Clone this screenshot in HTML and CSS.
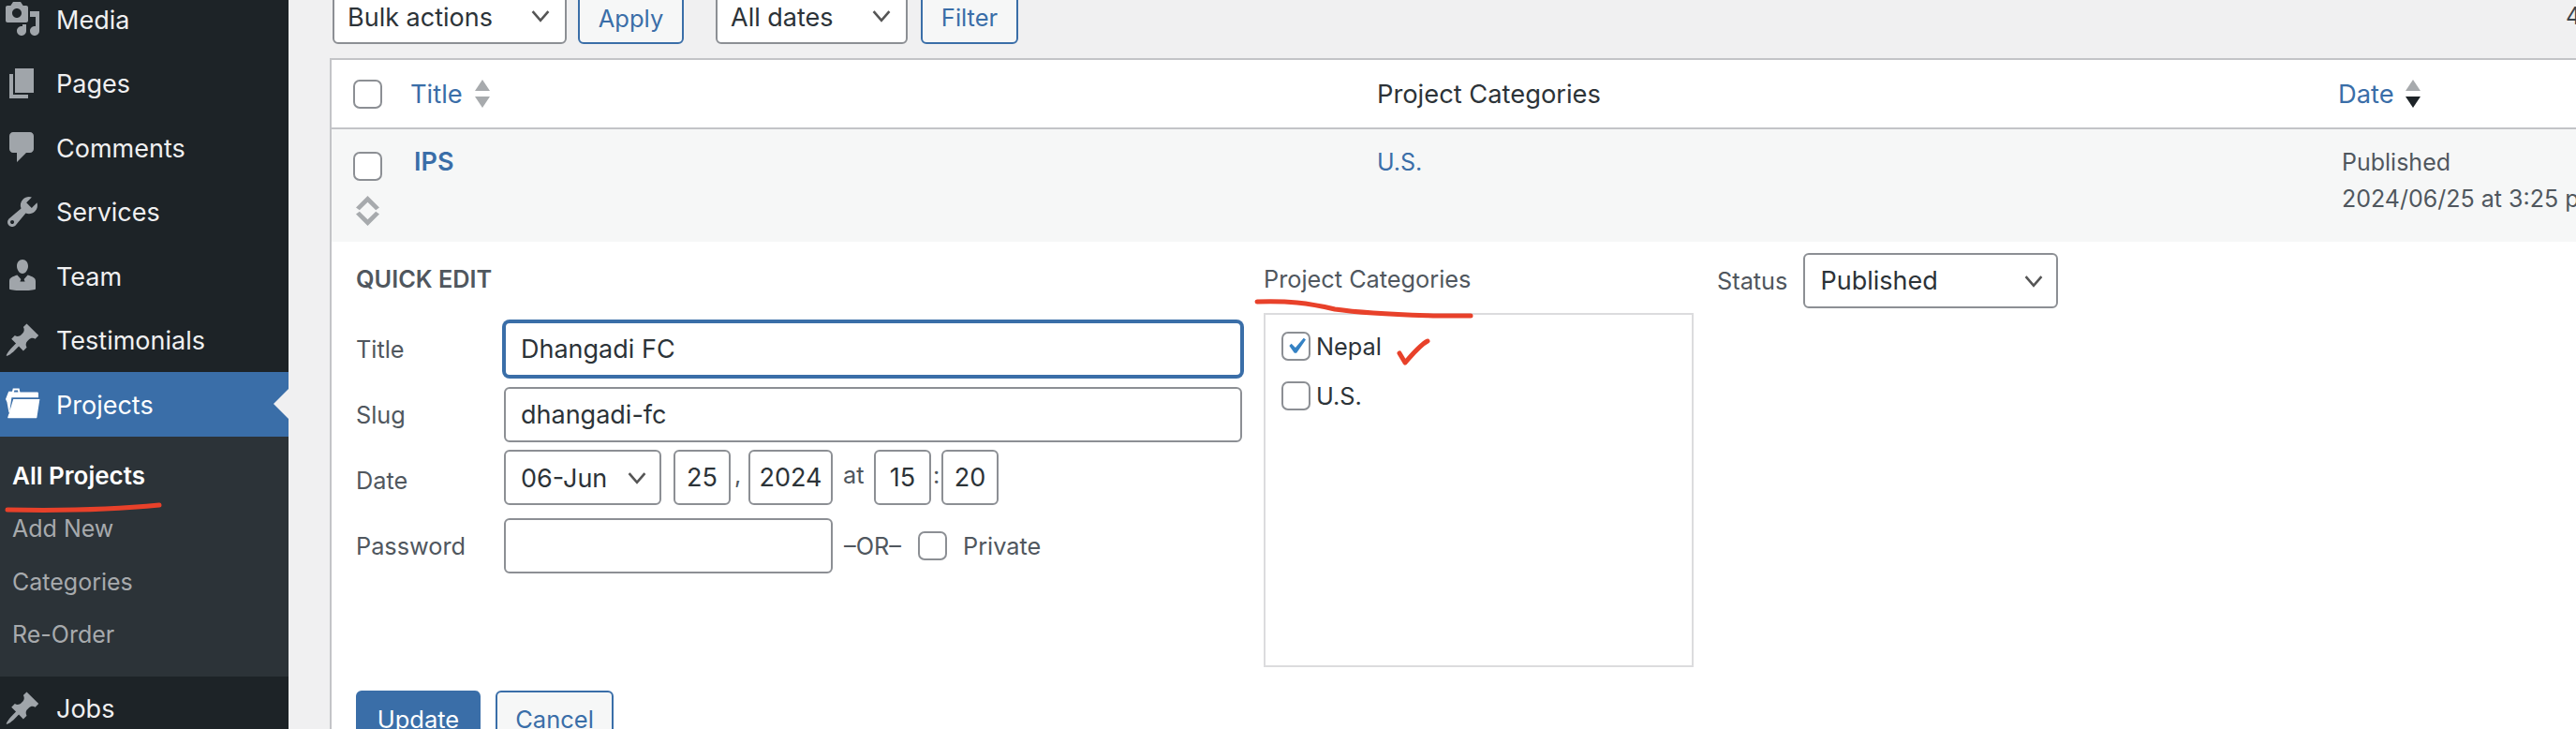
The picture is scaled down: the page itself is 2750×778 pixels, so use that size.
FILE: index.html
```html
<!DOCTYPE html>
<html lang="en">
<head>
	<meta charset="UTF-8">
	<title>Projects</title>
	<link rel="stylesheet" href="styles.css">
</head>
<body>
	<div class="menu">
		<a class="menu-item"><svg class="menu-icon" viewBox="0 0 20 20"><path d="M13 11V4c0-.55-.45-1-1-1h-1.67L9 1H5L3.67 3H2c-.55 0-1 .45-1 1v7c0 .55.45 1 1 1h10c.55 0 1-.45 1-1zM7 4.500c1.380 0 2.500 1.120 2.500 2.500S8.380 9.500 7 9.500 4.500 8.380 4.500 7 5.620 4.500 7 4.500zM14 6h5v10.500c0 1.380-1.120 2.500-2.500 2.500S14 17.880 14 16.500s1.120-2.500 2.500-2.500c.17 0 .34.02.5.05V9h-3V6zm-4 8.050V13h2v3.500c0 1.380-1.120 2.500-2.500 2.500S7 17.880 7 16.500 8.120 14 9.500 14c.17 0 .34.02.5.05z"/></svg>Media</a>
		<a class="menu-item"><svg class="menu-icon" viewBox="0 0 20 20"><path d="M6 15V2h10v13H6zm-1 1h8v2H3V5h2v11z"/></svg>Pages</a>
		<a class="menu-item"><svg class="menu-icon" viewBox="0 0 20 20"><path d="M5 2h9c1.100 0 2 .9 2 2v7c0 1.100-.9 2-2 2h-2l-5 5v-5H5c-1.100 0-2-.9-2-2V4c0-1.100.9-2 2-2z"/></svg>Comments</a>
		<a class="menu-item"><svg class="menu-icon" viewBox="0 0 20 20"><path d="M16.680 9.770c-1.340 1.340-3.300 1.670-4.950.99l-5.410 6.520c-.99.99-2.590.99-3.580 0s-.99-2.590 0-3.570l6.520-5.420c-.68-1.650-.35-3.610.99-4.950 1.280-1.280 3.120-1.620 4.720-1.060l-2.890 2.890 2.820 2.820 2.860-2.870c.53 1.580.18 3.390-1.080 4.650zM3.810 16.210c.4.39 1.040.39 1.430 0 .4-.4.4-1.040 0-1.430-.39-.4-1.030-.4-1.430 0-.39.39-.39 1.030 0 1.430z"/></svg>Services</a>
		<a class="menu-item"><svg class="menu-icon" viewBox="0 0 20 20"><path d="M10 1.500c-1.800 0-3 1.500-3 3.500 0 1.800 1.200 4 3 4s3-2.200 3-4c0-2-1.200-3.500-3-3.500zM7.200 9.800C4.800 10.600 3 11.200 3 13v4.200c2 1.100 12 1.100 14 0V13c0-1.800-1.800-2.400-4.200-3.200L10.800 12l.5 1.200h-2.600l.5-1.200z"/></svg>Team</a>
		<a class="menu-item"><svg class="menu-icon" viewBox="0 0 20 20"><path d="M10.440 3.020l1.820-1.820 6.360 6.350-1.830 1.820c-1.050-.68-2.480-.57-3.410.36l-.75.75c-.92.93-1.040 2.350-.35 3.410l-1.830 1.820-2.410-2.410-2.800 2.790c-.42.42-3.380 2.710-3.800 2.290s1.860-3.390 2.280-3.810l2.790-2.790L4.100 9.360l1.830-1.820c1.050.69 2.480.57 3.400-.36l.75-.75c.93-.92 1.050-2.350.36-3.410z"/></svg>Testimonials</a>
		<a class="menu-item current"><svg class="menu-icon" viewBox="0 0 20 20"><path fill-rule="evenodd" d="M1 7.500 2.600 3.400h1.900L4.900 1.700h3.400l.4 2h9.100c.5 0 .7.3.7.7v2.200H4.200L2.900 15.500 1.700 9zM5.700 2.700l-.3 1h2.300l-.2-1zM5.100 7.500h14.100l-1.500 9.700c0 .2-.2.4-.5.4H2.500c-.3 0-.5-.2-.4-.4z"/></svg>Projects</a>
		<div class="submenu">
			<a class="sub-item active">All Projects</a>
			<a class="sub-item">Add New</a>
			<a class="sub-item">Categories</a>
			<a class="sub-item">Re-Order</a>
		</div>
		<a class="menu-item"><svg class="menu-icon" viewBox="0 0 20 20"><path d="M10.440 3.020l1.820-1.820 6.360 6.350-1.830 1.820c-1.050-.68-2.480-.57-3.410.36l-.75.75c-.92.93-1.040 2.350-.35 3.410l-1.830 1.820-2.410-2.410-2.800 2.790c-.42.42-3.380 2.710-3.800 2.290s1.860-3.390 2.280-3.810l2.790-2.790L4.100 9.360l1.830-1.820c1.050.69 2.480.57 3.400-.36l.75-.75c.93-.92 1.050-2.350.36-3.410z"/></svg>Jobs</a>
	</div>

	<div class="main">
		<div class="toolbar">
			<select class="select bulk"><option>Bulk actions</option></select>
			<button class="btn apply">Apply</button>
			<select class="select dates"><option>All dates</option></select>
			<button class="btn filter">Filter</button>
			<span class="count">4 items</span>
		</div>

		<div class="table">
			<div class="row head">
				<div class="col-check"><input type="checkbox" class="check"></div>
				<div class="col-title"><a class="link">Title</a>
					<svg class="sort" viewBox="0 0 16 30"><path class="up" d="M8 0l8 12H0z"/><path class="down" d="M8 30L0 18h16z"/></svg>
				</div>
				<div class="col-cat">Project Categories</div>
				<div class="col-date"><a class="link">Date</a>
					<svg class="sort" viewBox="0 0 16 30"><path class="up" d="M8 0l8 12H0z"/><path class="down dark" d="M8 30L0 18h16z"/></svg>
				</div>
			</div>
			<div class="row post">
				<div class="col-check">
					<input type="checkbox" class="check">
					<svg class="drag" viewBox="0 0 25 32"><path d="M12.500 0 25 12.500l-3.800 2.800-8.700-8.500-8.700 8.500L0 12.500zM12.500 32 0 19.500l3.800-2.800 8.700 8.500 8.700-8.500 3.800 2.800z"/></svg>
				</div>
				<div class="col-title"><a class="link post-title">IPS</a></div>
				<div class="col-cat"><a class="link">U.S.</a></div>
				<div class="col-date">Published<br>2024/06/25 at 3:25 pm</div>
			</div>

			<div class="quick">
				<div class="quick-cols">
					<div class="quick-left">
						<div class="quick-head">QUICK EDIT</div>
						<div class="field title-field">
							<label class="field-label">Title</label>
							<input class="input wide focus" type="text" value="Dhangadi FC">
						</div>
						<div class="field slug-field">
							<label class="field-label">Slug</label>
							<input class="input wide" type="text" value="dhangadi-fc">
						</div>
						<div class="field date-field">
							<label class="field-label date-label">Date</label>
							<select class="select month"><option>06-Jun</option></select>
							<input class="input day" type="text" value="25">
							<span class="sep comma">,</span>
							<input class="input year" type="text" value="2024">
							<span class="sep at">at</span>
							<input class="input hour" type="text" value="15">
							<span class="sep colon">:</span>
							<input class="input hour" type="text" value="20">
						</div>
						<div class="field pass-field">
							<label class="field-label">Password</label>
							<input class="input pass" type="text">
							<span class="or">–OR–</span>
							<input type="checkbox" class="check">
							<span class="private">Private</span>
						</div>
					</div>

					<div class="quick-mid">
						<div class="cat-head">Project Categories</div>
						<div class="cat-box">
							<label class="cat-item"><input type="checkbox" class="check" checked>Nepal</label>
							<label class="cat-item"><input type="checkbox" class="check">U.S.</label>
						</div>
					</div>

					<div class="quick-right">
						<span class="status-label">Status</span>
						<select class="select status"><option>Published</option></select>
					</div>
				</div>
				<div class="quick-actions">
					<button class="btn primary">Update</button>
					<button class="btn cancel">Cancel</button>
				</div>
			</div>
		</div>
	</div>

	<!-- red pen marks drawn over the screenshot -->
	<svg class="marks" viewBox="0 0 2750 778">
		<path d="M8 544C60 545 120 544 170 539" />
		<path d="M1342 322C1375 321 1395 323 1425 330C1460 335 1500 336 1530 337L1570 337" />
		<path d="M1494 377L1500 387C1508 378 1516 368 1524 364" />
	</svg>
</body>
</html>
```

FILE: styles.css
```css
html,body{
	margin: 0;
	height: 778px;
	overflow: hidden;
}
body{
	position: relative;
	display: flex;
	background: #f0f0f1;
	font-family: Inter, "Liberation Sans", sans-serif;
	color: #3c434a;
}
a{
	text-decoration: none;
}

/* left menu */
.menu{
	flex: none;
	width: 308px;
	height: 792px;
	margin-top: -14px;
	background: #1d2327;
}
.menu-item{
	position: relative;
	display: flex;
	align-items: center;
	box-sizing: border-box;
	height: 68.500px;
	padding-top: 2px;
	font-size: 27px;
	color: #f0f0f1;
}
.menu-icon{
	flex: none;
	width: 40px;
	height: 40px;
	margin: -2px 16px 0 4px;
	fill: #a0a5aa;
}
.menu-item.current{
	background: #3a6ea8;
	color: #fff;
}
.current .menu-icon{
	fill: #fff;
}
.current::after{
	content: "";
	position: absolute;
	right: 0;
	top: 18px;
	border: 16px solid transparent;
	border-left: 0;
	border-right-color: #f0f0f1;
}
.submenu{
	padding: 14px 0 16px;
	background: #2c3338;
}
.sub-item{
	display: flex;
	align-items: center;
	height: 56.500px;
	padding-left: 13px;
	font-size: 25px;
	color: #a7aaad;
}
.sub-item.active{
	font-size: 26px;
	font-weight: 600;
	color: #fff;
}

/* right side */
.main{
	flex: 1;
	min-width: 0;
	padding-left: 44px;
}
.toolbar{
	display: flex;
	align-items: stretch;
	width: 2500px;
	height: 60px;
	margin: -13px 0 15px;
	white-space: nowrap;
}
.select{
	height: 60px;
	padding: 2px 50px 0 14px;
	border: 2px solid #8c8f94;
	border-radius: 6px;
	font-family: inherit;
	font-size: 27px;
	color: #2c3338;
	background: #fff url("data:image/svg+xml,%3Csvg xmlns='http://www.w3.org/2000/svg' viewBox='0 0 20 20'%3E%3Cpath d='M3 6l7 8 7-8' fill='none' stroke='%23555' stroke-width='2.200'/%3E%3C/svg%3E") no-repeat right 14px center / 24px 24px;
	appearance: none;
}
.btn{
	height: 60px;
	padding: 0;
	border: 2px solid #3a6ea8;
	border-radius: 6px;
	background: #f6f7f7;
	font-family: inherit;
	font-size: 25.500px;
	color: #3a6ea8;
}
.bulk{
	width: 250px;
	margin-left: 3px;
}
.apply{
	width: 113px;
	margin-left: 12px;
	padding-top: 4px;
}
.dates{
	width: 205px;
	margin-left: 34px;
}
.filter{
	width: 104px;
	margin-left: 14px;
	padding-top: 2px;
}
.count{
	margin-left: 1652px;
	line-height: 60px;
	font-size: 25px;
}

.table{
	width: 2500px;
	border-top: 2px solid #c3c4c7;
	border-left: 2px solid #c3c4c7;
	background: #fff;
}
.row{
	display: grid;
	grid-template-columns: 84px 1032px 1026px 1fr;
}
.head{
	height: 72px;
	border-bottom: 2px solid #c3c4c7;
	font-size: 27.300px;
	color: #2c3338;
}
.head > div{
	display: flex;
	align-items: center;
}
.post{
	height: 120px;
	background: #f6f7f7;
	font-size: 25px;
	line-height: 39px;
	color: #50575e;
}
.post > div{
	padding-top: 16px;
}
.link{
	color: #3a6ea8;
}
.check{
	display: block;
	flex: none;
	width: 31px;
	height: 31px;
	margin: 0;
	border: 2px solid #8c8f94;
	border-radius: 7px;
	background: #fff;
	appearance: none;
}
.check:checked{
	background: #fff url("data:image/svg+xml,%3Csvg xmlns='http://www.w3.org/2000/svg' viewBox='0 0 20 20'%3E%3Cpath d='M14.830 4.890l1.340.94-5.810 8.380H9.020L5.780 9.670l1.340-1.250 2.570 2.400z' fill='%233582c4'/%3E%3C/svg%3E") no-repeat center / 34px 34px;
}
.col-check{
	padding-left: 23px;
}
.head .col-title{
	gap: 13px;
}
.head .col-date{
	gap: 12px;
}
.post .col-date{
	padding-left: 4px;
}
.post .col-check{
	padding-top: 24px;
}
.post .col-title{
	padding-top: 15px;
	padding-left: 4px;
}
.sort{
	width: 16px;
	height: 30px;
}
.up,.down{
	fill: #a7aaad;
}
.down.dark{
	fill: #1d2327;
}
.drag{
	display: block;
	width: 25px;
	height: 32px;
	margin: 16px 0 0 3px;
	fill: #a7aaad;
}
.post-title{
	font-weight: 600;
	font-size: 27px;
}

/* quick edit row */
.quick{
	padding-left: 26px;
	font-size: 25.300px;
	color: #50575e;
}
.quick-cols{
	display: flex;
	height: 454px;
}
.quick-left{
	width: 946px;
	margin-right: 23px;
}
.quick-head{
	height: 85px;
	padding-top: 26px;
	box-sizing: border-box;
	font-weight: 600;
	line-height: 28px;
}
.field{
	display: flex;
	align-items: center;
	margin-bottom: 11px;
}
.field-label{
	flex: none;
	width: 158px;
}
.date-label{
	padding-top: 6px;
}
.input{
	box-sizing: border-box;
	height: 59px;
	padding: 0 16px;
	border: 2px solid #8c8f94;
	border-radius: 6px;
	background: #fff;
	font-family: inherit;
	font-size: 27px;
	color: #2c3338;
	outline: none;
}
.wide{
	width: 788px;
}
.focus{
	border-color: #3a6ea8;
	box-shadow: 0 0 0 2px #3a6ea8;
}
.slug-field{
	margin-bottom: 8px;
}
.date-field{
	margin-bottom: 14px;
}
.month{
	width: 168px;
	height: 59px;
	margin-right: 13px;
	padding-left: 16px;
	background-position: right 12px center;
}
.day,.hour{
	width: 61px;
	padding: 0;
	text-align: center;
}
.year{
	width: 90px;
	padding: 0;
	text-align: center;
}
.sep{
	padding-bottom: 6px;
}
.comma{
	width: 19px;
	text-indent: 4px;
}
.at{
	width: 44px;
	text-indent: 11px;
}
.colon{
	width: 11px;
	text-indent: 2px;
}
.pass{
	width: 351px;
}
.or{
	width: 79px;
	margin-left: 12px;
}
.private{
	margin-left: 17px;
}
.quick-mid{
	width: 459px;
	margin-right: 25px;
}
.cat-head{
	height: 76px;
	padding-top: 26px;
	box-sizing: border-box;
	line-height: 28px;
}
.cat-box{
	box-sizing: border-box;
	height: 378px;
	padding: 17px 17px;
	border: 2px solid #dcdcde;
}
.cat-item{
	display: flex;
	align-items: center;
	gap: 6px;
	height: 32px;
	margin-bottom: 21px;
	color: #2c3338;
}
.quick-right{
	display: flex;
	align-items: flex-start;
	padding-top: 12px;
}
.status-label{
	margin-top: 14px;
	margin-right: 17px;
}
.status{
	width: 272px;
	height: 59px;
	padding: 0 50px 0 16px;
	background-position: right 12px center;
}
.quick-actions{
	display: flex;
	gap: 16px;
	margin-top: 25px;
}
.primary{
	width: 133px;
	border-color: #3a6ea8;
	background: #3a6ea8;
	color: #fff;
}
.cancel{
	width: 126px;
}

.marks{
	position: absolute;
	left: 0;
	top: 0;
	width: 2750px;
	height: 778px;
	fill: none;
	stroke: #e8412a;
	stroke-width: 5;
	stroke-linecap: round;
	stroke-linejoin: round;
}
```
